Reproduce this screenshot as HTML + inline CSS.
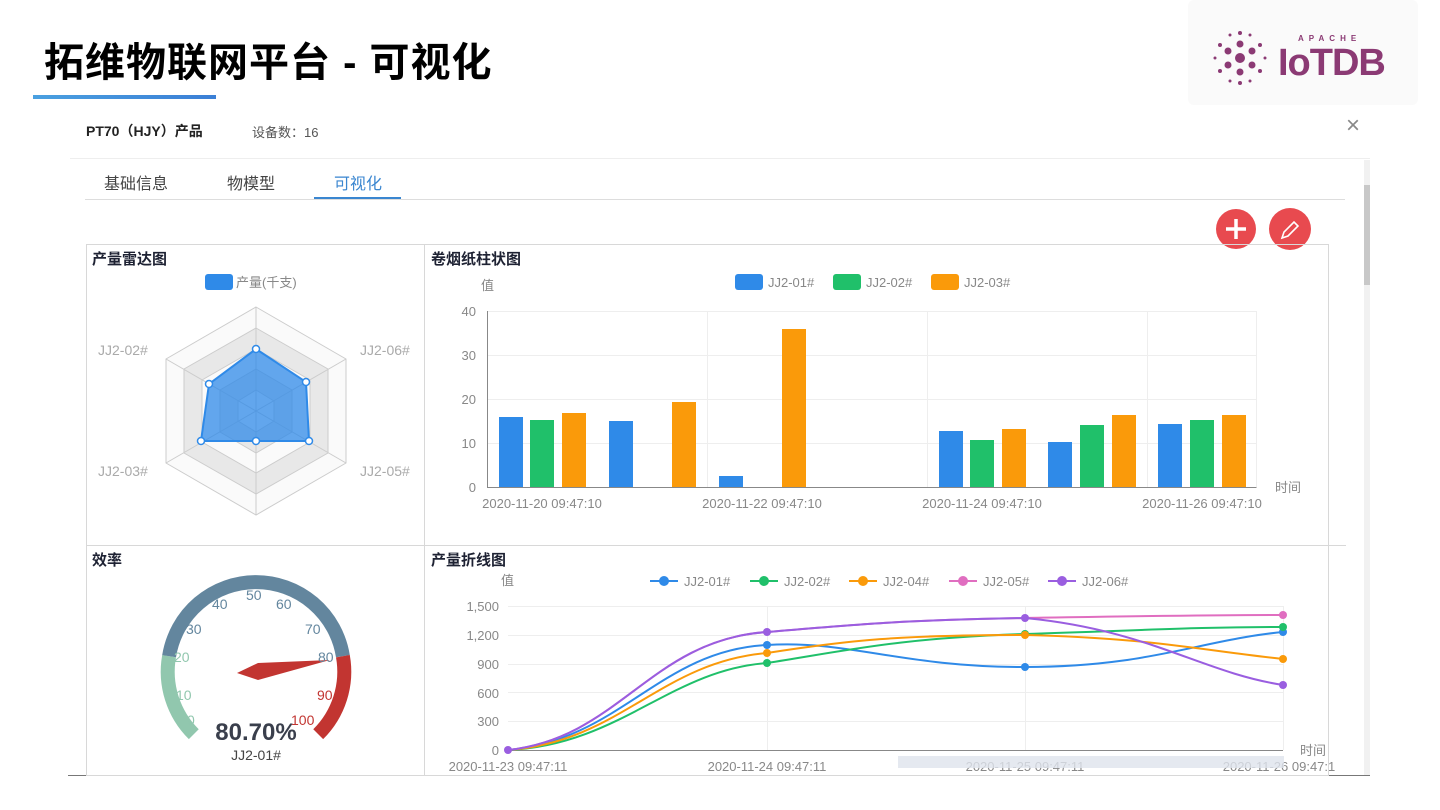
<!DOCTYPE html>
<html><head><meta charset="utf-8">
<style>
body{margin:0;width:1440px;height:810px;background:#fff;overflow:hidden;font-family:"Liberation Sans","Noto Sans CJK SC",sans-serif;position:relative}
.a{position:absolute}
</style></head><body>
<div class="a" style="left:44px;top:30px;font-size:40px;font-weight:bold;color:#000;letter-spacing:1px">拓维物联网平台 - 可视化</div>
<div class="a" style="left:33px;top:95px;width:183px;height:4px;background:linear-gradient(90deg,#4aa0e0,#3b7fd6)"></div>
<div class="a" style="left:1188px;top:0;width:230px;height:105px;background:#fafafa;border-radius:6px"></div>
<svg class="a" style="left:1210px;top:25px" width="200" height="65" viewBox="0 0 200 65">
<g fill="#8b3a74">
<circle cx="30" cy="33" r="5"/><circle cx="30" cy="19" r="3.5"/><circle cx="30" cy="47" r="3.5"/><circle cx="18" cy="26" r="3.5"/><circle cx="42" cy="26" r="3.5"/><circle cx="18" cy="40" r="3.5"/><circle cx="42" cy="40" r="3.5"/>
<circle cx="30" cy="8" r="2"/><circle cx="30" cy="58" r="2"/><circle cx="10" cy="20" r="2"/><circle cx="50" cy="20" r="2"/><circle cx="10" cy="46" r="2"/><circle cx="50" cy="46" r="2"/><circle cx="5" cy="33" r="1.5"/><circle cx="55" cy="33" r="1.5"/><circle cx="20" cy="10" r="1.5"/><circle cx="40" cy="10" r="1.5"/><circle cx="20" cy="56" r="1.5"/><circle cx="40" cy="56" r="1.5"/>
</g>
<text x="88" y="16" font-size="8" fill="#8b3a74" font-family="Liberation Sans" letter-spacing="5" font-weight="bold">APACHE</text>
<text x="68" y="50" font-size="38" fill="#8b3a74" font-family="Liberation Sans" font-weight="bold" letter-spacing="-1">IoTDB</text>
</svg>

<div class="a" style="left:86px;top:121px;font-size:14px;font-weight:bold;color:#222">PT70（HJY）产品</div>
<div class="a" style="left:252px;top:122px;font-size:13px;color:#555">设备数：16</div>
<div class="a" style="left:1346px;top:112px;font-size:24px;color:#888;font-weight:200">×</div>
<div class="a" style="left:70px;top:158px;width:1300px;height:1px;background:#eee"></div>
<div class="a" style="left:104px;top:170px;font-size:16px;color:#444">基础信息</div>
<div class="a" style="left:227px;top:170px;font-size:16px;color:#444">物模型</div>
<div class="a" style="left:334px;top:170px;font-size:16px;color:#3a86d0">可视化</div>
<div class="a" style="left:85px;top:199px;width:1260px;height:1px;background:#ddd"></div>
<div class="a" style="left:314px;top:197px;width:87px;height:2px;background:#3a86d0"></div>
<div class="a" style="left:1364px;top:160px;width:6px;height:615px;background:#f1f1f1"></div>
<div class="a" style="left:1364px;top:185px;width:6px;height:100px;background:#c8c8c8"></div>
<div class="a" style="left:68px;top:775px;width:1302px;height:1px;background:#777"></div>

<svg class="a" style="left:0;top:0" width="1440" height="810" font-family="Liberation Sans,Noto Sans CJK SC,sans-serif">
<!-- buttons -->
<circle cx="1236" cy="229" r="20" fill="#e84a4f"/><path d="M1236 219v20M1226 229h20" stroke="#fff" stroke-width="3.5"/>
<circle cx="1290" cy="229" r="21" fill="#e84a4f"/><path d="M1282 238l2-6 10-10 4 4-10 10z" fill="none" stroke="#fff" stroke-width="1.6"/>
<!-- grid boxes -->
<g fill="none" stroke="#d8d8d8">
<rect x="86.5" y="244.5" width="1242" height="531"/>
<path d="M424.5 244v531M86 545.5h1260"/>
</g>
<g font-size="15" font-weight="bold" fill="#1e2233">
<text x="92" y="264">产量雷达图</text><text x="431" y="264">卷烟纸柱状图</text>
<text x="92" y="565">效率</text><text x="431" y="565">产量折线图</text></g>
<!-- radar -->
<rect x="205" y="274" width="28" height="16" rx="3" fill="#2f8ae8"/>
<text x="236" y="287" font-size="13" fill="#888">产量(千支)</text>
<g transform="translate(256,411)">
<polygon points="0,-104 90,-52 90,52 0,104 -90,52 -90,-52" fill="#fafafa" stroke="#ccc"/>
<polygon points="0,-83 72,-42 72,42 0,83 -72,42 -72,-42" fill="#e8e8e8" stroke="#ccc"/>
<polygon points="0,-62 54,-31 54,31 0,62 -54,31 -54,-31" fill="#fafafa" stroke="#ccc"/>
<polygon points="0,-42 36,-21 36,21 0,42 -36,21 -36,-21" fill="#e8e8e8" stroke="#ccc"/>
<polygon points="0,-21 18,-10 18,10 0,21 -18,10 -18,-10" fill="#fafafa" stroke="#ccc"/>
<path d="M0 -104V104M-90 -52L90 52M-90 52L90 -52" stroke="#ccc"/>
</g>
<polygon points="256,349 306,382 309,441 256,441 201,441 209,384" fill="rgba(47,138,232,.75)" stroke="#2f8ae8" stroke-width="2"/>
<g fill="#fff" stroke="#2f8ae8" stroke-width="1.5"><circle cx="256" cy="349" r="3.5"/><circle cx="306" cy="382" r="3.5"/><circle cx="309" cy="441" r="3.5"/><circle cx="256" cy="441" r="3.5"/><circle cx="201" cy="441" r="3.5"/><circle cx="209" cy="384" r="3.5"/></g>
<g font-size="14" fill="#aaa"><text x="98" y="355">JJ2-02#</text><text x="360" y="355">JJ2-06#</text><text x="98" y="476">JJ2-03#</text><text x="360" y="476">JJ2-05#</text></g>
<!-- bar chart -->
<g font-size="13" fill="#888">
<rect x="735" y="274" width="28" height="16" rx="3" fill="#2f8ae8"/><text x="768" y="287">JJ2-01#</text>
<rect x="833" y="274" width="28" height="16" rx="3" fill="#20c06a"/><text x="866" y="287">JJ2-02#</text>
<rect x="931" y="274" width="28" height="16" rx="3" fill="#fa9a0a"/><text x="964" y="287">JJ2-03#</text>
<text x="481" y="290">值</text><text x="1275" y="492">时间</text>
<text x="476" y="316" text-anchor="end">40</text><text x="476" y="360" text-anchor="end">30</text><text x="476" y="404" text-anchor="end">20</text><text x="476" y="448" text-anchor="end">10</text><text x="476" y="492" text-anchor="end">0</text>
<text x="542" y="508" text-anchor="middle">2020-11-20 09:47:10</text><text x="762" y="508" text-anchor="middle">2020-11-22 09:47:10</text><text x="982" y="508" text-anchor="middle">2020-11-24 09:47:10</text><text x="1202" y="508" text-anchor="middle">2020-11-26 09:47:10</text>
</g>
<g stroke="#eee"><path d="M487 311.5h769M487 355.5h769M487 399.5h769M487 443.5h769M707.5 311v176M927.5 311v176M1147.5 311v176M1256.5 311v176"/></g>
<path d="M487.5 311v176.5h769" stroke="#888" fill="none"/>
<g fill="#2f8ae8"><rect x="499" y="417" width="24" height="70"/><rect x="609" y="421" width="24" height="66"/><rect x="719" y="476" width="24" height="11"/><rect x="939" y="431" width="24" height="56"/><rect x="1048" y="442" width="24" height="45"/><rect x="1158" y="424" width="24" height="63"/></g>
<g fill="#20c06a"><rect x="530" y="420" width="24" height="67"/><rect x="970" y="440" width="24" height="47"/><rect x="1080" y="425" width="24" height="62"/><rect x="1190" y="420" width="24" height="67"/></g>
<g fill="#fa9a0a"><rect x="562" y="413" width="24" height="74"/><rect x="672" y="402" width="24" height="85"/><rect x="782" y="329" width="24" height="158"/><rect x="1002" y="429" width="24" height="58"/><rect x="1112" y="415" width="24" height="72"/><rect x="1222" y="415" width="24" height="72"/></g>
<!-- gauge -->
<g fill="none" stroke-width="14">
<path d="M193.8 734.2A88 88 0 0 1 169.1 656.2" stroke="#91c7ae"/>
<path d="M169.1 656.2A88 88 0 0 1 342.9 656.2" stroke="#63869e"/>
<path d="M342.9 656.2A88 88 0 0 1 318.2 734.2" stroke="#c23531"/>
</g>
<polygon points="237,673 258,663 330,660 258,680" fill="#c23531"/>
<g font-size="14">
<text x="187" y="725" fill="#91c7ae">0</text><text x="176" y="700" fill="#91c7ae">10</text><text x="174" y="662" fill="#91c7ae">20</text>
<text x="186" y="634" fill="#63869e">30</text><text x="212" y="609" fill="#63869e">40</text><text x="246" y="600" fill="#63869e">50</text><text x="276" y="609" fill="#63869e">60</text><text x="305" y="634" fill="#63869e">70</text><text x="318" y="662" fill="#63869e">80</text>
<text x="317" y="700" fill="#c23531">90</text><text x="291" y="725" fill="#c23531">100</text>
</g>
<text x="256" y="740" font-size="24" font-weight="bold" fill="#3a3f4c" text-anchor="middle">80.70%</text>
<text x="256" y="760" font-size="14" fill="#444" text-anchor="middle">JJ2-01#</text>
<!-- line chart -->
<g font-size="13" fill="#888">
<text x="501" y="585">值</text><text x="1300" y="755">时间</text>
<text x="499" y="611" text-anchor="end">1,500</text><text x="499" y="640" text-anchor="end">1,200</text><text x="499" y="669" text-anchor="end">900</text><text x="499" y="698" text-anchor="end">600</text><text x="499" y="726" text-anchor="end">300</text><text x="499" y="755" text-anchor="end">0</text>
<text x="508" y="771" text-anchor="middle">2020-11-23 09:47:11</text><text x="767" y="771" text-anchor="middle">2020-11-24 09:47:11</text><text x="1025" y="771" text-anchor="middle">2020-11-25 09:47:11</text><text x="1279" y="771" text-anchor="middle">2020-11-26 09:47:1</text>
</g>
<rect x="898" y="756" width="386" height="12" fill="#dfe4ec" opacity=".8"/>
<g stroke="#eee"><path d="M508 606.5h775M508 635.5h775M508 664.5h775M508 692.5h775M508 721.5h775M767.5 606v144M1025.5 606v144M1283.5 606v144"/></g>
<path d="M508 750.5h775" stroke="#888"/>
<g font-size="13" fill="#888">
<path d="M650 581h28" stroke="#2f8ae8" stroke-width="2"/><circle cx="664" cy="581" r="5" fill="#2f8ae8"/><text x="684" y="586">JJ2-01#</text>
<path d="M750 581h28" stroke="#20c06a" stroke-width="2"/><circle cx="764" cy="581" r="5" fill="#20c06a"/><text x="784" y="586">JJ2-02#</text>
<path d="M849 581h28" stroke="#fa9a0a" stroke-width="2"/><circle cx="863" cy="581" r="5" fill="#fa9a0a"/><text x="883" y="586">JJ2-04#</text>
<path d="M949 581h28" stroke="#e06ec0" stroke-width="2"/><circle cx="963" cy="581" r="5" fill="#e06ec0"/><text x="983" y="586">JJ2-05#</text>
<path d="M1048 581h28" stroke="#9a5ee0" stroke-width="2"/><circle cx="1062" cy="581" r="5" fill="#9a5ee0"/><text x="1082" y="586">JJ2-06#</text>
</g>
<g fill="none" stroke-width="2">
<path d="M508 750C620 740 660 650 767 645C850 640 900 667 1025 667C1150 667 1200 640 1283 632" stroke="#2f8ae8"/>
<path d="M508 750C620 745 670 670 767 663C850 650 900 638 1025 634C1150 630 1200 627 1283 627" stroke="#20c06a"/>
<path d="M508 750C620 742 660 662 767 653C850 640 900 635 1025 635C1150 638 1200 650 1283 659" stroke="#fa9a0a"/>
<path d="M508 750C620 738 650 640 767 632C850 625 900 620 1025 618C1150 616 1200 615 1283 615" stroke="#e06ec0"/>
<path d="M508 750C620 738 650 640 767 632C850 625 900 620 1025 618C1150 630 1200 672 1283 685" stroke="#9a5ee0"/>
</g>
<g><circle cx="767" cy="645" r="4" fill="#2f8ae8"/><circle cx="1025" cy="667" r="4" fill="#2f8ae8"/><circle cx="1283" cy="632" r="4" fill="#2f8ae8"/>
<circle cx="767" cy="663" r="4" fill="#20c06a"/><circle cx="1025" cy="634" r="4" fill="#20c06a"/><circle cx="1283" cy="627" r="4" fill="#20c06a"/>
<circle cx="767" cy="653" r="4" fill="#fa9a0a"/><circle cx="1025" cy="635" r="4" fill="#fa9a0a"/><circle cx="1283" cy="659" r="4" fill="#fa9a0a"/>
<circle cx="1283" cy="615" r="4" fill="#e06ec0"/>
<circle cx="508" cy="750" r="4" fill="#9a5ee0"/><circle cx="767" cy="632" r="4" fill="#9a5ee0"/><circle cx="1025" cy="618" r="4" fill="#9a5ee0"/><circle cx="1283" cy="685" r="4" fill="#9a5ee0"/></g>
</svg>
</body></html>
